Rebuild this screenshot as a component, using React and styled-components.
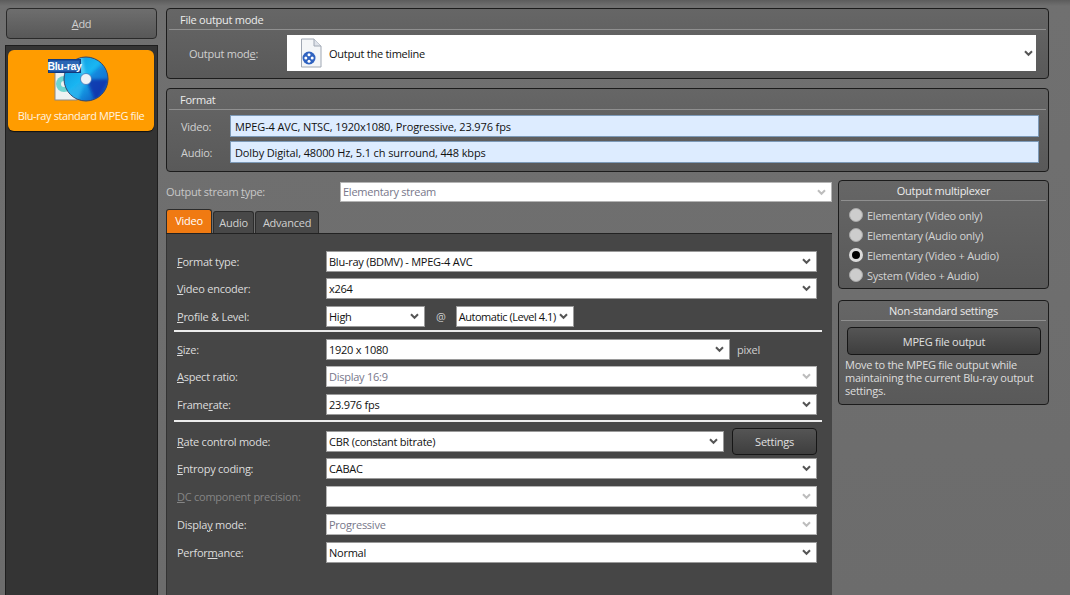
import React from "react";
import styled, { createGlobalStyle } from "styled-components";

const GlobalStyle = createGlobalStyle`
  html, body {
    margin: 0;
    padding: 0;
    background: #6b6b6b;
  }
  body {
    font-family: "Open Sans", "Liberation Sans", sans-serif;
    font-size: 11px;
    letter-spacing: -0.25px;
    color: #e4e4e4;
  }
  u {
    text-underline-offset: 1px;
  }
`;

const Page = styled.div`
  width: 1070px;
  height: 595px;
  overflow: hidden;
  display: flex;
  align-items: stretch;
  box-sizing: border-box;
  padding: 8px 21px 0 5px;
  background: linear-gradient(#5c5c5c 0, #707070 6px, #6c6c6c 100%);
`;

const Sidebar = styled.div`
  width: 153px;
  margin-right: 8px;
  display: flex;
  flex-direction: column;
  gap: 6px;
`;

const AddButton = styled.div`
  height: 31px;
  margin: 0 1px;
  box-sizing: border-box;
  border: 1px solid #2a2a2a;
  border-radius: 4px;
  background: linear-gradient(#6e6e6e, #585858);
  color: #d0d0d0;
  display: flex;
  align-items: center;
  justify-content: center;
`;

const PresetList = styled.div`
  flex: 1;
  box-sizing: border-box;
  padding: 4px 3px 0 2px;
  background: #343434;
  border: 1px solid #1e1e1e;
  border-bottom: 0;
`;

const PresetCard = styled.div`
  height: 81px;
  box-sizing: border-box;
  background: #ff9c00;
  border-radius: 6px;
  box-shadow: 0 1px 1px #111;
  display: flex;
  flex-direction: column;
  align-items: center;
  padding-top: 6px;
  color: #fff4e0;
`;

const PresetName = styled.div`
  margin-top: 4px;
  letter-spacing: -0.4px;
  white-space: nowrap;
`;

const Main = styled.div`
  flex: 1;
  min-width: 0;
  display: flex;
  flex-direction: column;
`;

const Panel = styled.div`
  box-sizing: border-box;
  height: ${(p) => p.$height}px;
  margin-top: ${(p) => p.$top || 0}px;
  background: linear-gradient(#666, #595959);
  border: 1px solid #1c1c1c;
  border-radius: 4px;
`;

const PanelTitle = styled.div`
  height: ${(p) => (p.$center ? 19 : 20)}px;
  margin: 0 2px;
  padding: 0 ${(p) => (p.$center ? 0 : 11)}px;
  border-bottom: 1px solid #8f8f8f;
  display: flex;
  align-items: center;
  justify-content: ${(p) => (p.$center ? "center" : "flex-start")};
  color: #ececec;
`;

const ModeRow = styled.div`
  display: flex;
  align-items: center;
  padding: 5px 12px 0 22px;
`;

const ModeLabel = styled.div`
  width: 98px;
  color: #d0d0d0;
`;

const ModeCombo = styled.div`
  flex: 1;
  height: 36px;
  background: #fff;
  color: #111;
  display: flex;
  align-items: center;
  padding: 0 3px 0 12px;
  gap: 6px;
`;

const FormatRow = styled.div`
  display: flex;
  align-items: center;
  padding: 0 9px 0 14px;
  margin-top: ${(p) => p.$top}px;
`;

const FormatLabel = styled.div`
  width: 49px;
  color: #d0d0d0;
`;

const FormatValue = styled.div`
  flex: 1;
  height: 22px;
  box-sizing: border-box;
  background: #ddecff;
  border: 1px solid #7d9ab8;
  color: #111;
  display: flex;
  align-items: center;
  padding-left: 4px;
  letter-spacing: -0.12px;
`;

const Lower = styled.div`
  flex: 1;
  min-height: 0;
  display: flex;
  gap: 6px;
  margin-top: 9px;
`;

const LeftColumn = styled.div`
  width: 666px;
  display: flex;
  flex-direction: column;
`;

const StreamRow = styled.div`
  height: 22px;
  display: flex;
  align-items: center;
  color: #c8c8c8;
`;

const StreamLabel = styled.div`
  width: 174px;
  margin-top: -2px;
`;

const Tabs = styled.div`
  display: flex;
  align-items: flex-end;
  height: 24px;
  margin-top: 6px;
  gap: 1px;
`;

const Tab = styled.div`
  height: ${(p) => (p.$active ? 24 : 22)}px;
  width: ${(p) => p.$width}px;
  box-sizing: border-box;
  border: 1px solid #2c2c2c;
  border-bottom: 0;
  border-radius: 3px 3px 0 0;
  padding-bottom: ${(p) => (p.$active ? 2 : 0)}px;
  background: ${(p) => (p.$active ? "#f07a12" : "#484848")};
  color: ${(p) => (p.$active ? "#fff" : "#d0d0d0")};
  display: flex;
  align-items: center;
  justify-content: center;
`;

const TabBody = styled.div`
  flex: 1;
  box-sizing: border-box;
  background: #464646;
  border-top: 1px solid #222;
  box-shadow: inset 1px 0 0 #333;
  padding: 17px 15px 0 11px;
`;

const Row = styled.div`
  display: flex;
  align-items: center;
  height: 21px;
  margin-top: ${(p) => p.$top}px;
  color: ${(p) => (p.$muted ? "#858585" : "#dcdcdc")};
`;

const RowLabel = styled.div`
  width: 149px;
  flex: none;
`;

const Combo = styled.div`
  flex: ${(p) => (p.$width ? "none" : 1)};
  width: ${(p) => (p.$width ? `${p.$width}px` : "auto")};
  height: ${(p) => (p.$short ? 20 : 21)}px;
  box-sizing: border-box;
  background: #fff;
  border: 1px solid ${(p) => (p.$disabled ? "#b4b4b4" : "#9a9a9a")};
  color: ${(p) => (p.$disabled ? "#77778a" : "#111")};
  display: flex;
  align-items: center;
  padding: 0 5px 0 2px;
  white-space: nowrap;
`;

const ComboText = styled.div`
  flex: 1;
  min-width: 0;
  margin-top: ${(p) => (p.$lift ? -2 : 0)}px;
`;

const LevelText = styled(ComboText)`
  letter-spacing: -0.45px;
`;

const Side = styled.span`
  color: #cfcfcf;
  margin-left: ${(p) => p.$gap}px;
  margin-right: ${(p) => p.$right || 0}px;
`;

const Rule = styled.div`
  height: 2px;
  background: #ececec;
  margin: ${(p) => p.$top}px -5px 0 -3px;
`;

const SettingsButton = styled.div`
  width: 85px;
  height: 27px;
  margin: -3px 0 -3px 8px;
  flex: none;
  box-sizing: border-box;
  border: 1px solid #161616;
  border-radius: 4px;
  background: linear-gradient(#555, #3e3e3e);
  color: #e0e0e0;
  display: flex;
  align-items: center;
  justify-content: center;
`;

const RightColumn = styled.div`
  flex: 1;
  margin-top: -1px;
  display: flex;
  flex-direction: column;
`;

const RadioList = styled.div`
  padding: 4px 0 0 10px;
  display: flex;
  flex-direction: column;
`;

const RadioRow = styled.div`
  height: 20px;
  display: flex;
  align-items: center;
  gap: 4px;
  color: #d4d4d4;
`;

const RadioDot = styled.div`
  width: 14px;
  height: 14px;
  box-sizing: border-box;
  border-radius: 50%;
  border: ${(p) => (p.$on ? "3px solid #dcdcdc" : "1px solid #a8a8a8")};
  background: ${(p) => (p.$on ? "#000" : "#cdcdcd")};
`;

const WideButton = styled.div`
  height: 28px;
  margin: 6px 7px 0 8px;
  box-sizing: border-box;
  border: 1px solid #161616;
  border-radius: 4px;
  background: linear-gradient(#555, #3e3e3e);
  color: #e0e0e0;
  display: flex;
  align-items: center;
  justify-content: center;
`;

const Note = styled.div`
  padding: 3px 6px 0;
  line-height: 13px;
  color: #dedede;
`;

const Chevron = ({ muted }) => (
  <svg width="9" height="7" viewBox="0 0 9 7" style={{ flex: "none" }}>
    <path d="M1 1.2 L4.5 4.8 L8 1.2" fill="none" stroke={muted ? "#bdbdbd" : "#555"} strokeWidth="2" />
  </svg>
);

const DiscIcon = () => (
  <svg width="66" height="48" viewBox="0 0 66 48">
    <defs>
      <linearGradient id="disc" x1="0" y1="0" x2="1" y2="1">
        <stop offset="0" stopColor="#0b8fd8" />
        <stop offset="0.45" stopColor="#19b6f2" />
        <stop offset="1" stopColor="#0a3fb4" />
      </linearGradient>
      <filter id="soft">
        <feGaussianBlur stdDeviation="1.6" />
      </filter>
      <clipPath id="discClip">
        <circle cx="38" cy="23" r="21.5" />
      </clipPath>
    </defs>
    <rect x="7" y="14" width="22" height="30" fill="#eef2f2" stroke="#8a8a8a" />
    <circle cx="16" cy="28" r="8" fill="#6fd5d0" />
    <circle cx="16" cy="28" r="3" fill="#eef2f2" />
    <circle cx="38" cy="23" r="22" fill="url(#disc)" stroke="#34446a" strokeWidth="1" />
    <g clipPath="url(#discClip)">
      <g filter="url(#soft)">
        <path d="M38 23 L62 23 L48 47 Z" fill="#0a2aa8" opacity="0.8" />
        <path d="M38 23 L58 6 L62 23 Z" fill="#0e74d6" opacity="0.6" />
        <path d="M38 23 L22 4 L34 -1 Z" fill="#6fdcfb" opacity="0.7" />
        <path d="M38 23 L17 38 L29 47 Z" fill="#2ab4ee" opacity="0.8" />
      </g>
    </g>
    <circle cx="38" cy="23" r="5.5" fill="#eef2f6" stroke="#3a6ab0" strokeWidth="0.7" />
    <rect x="0.5" y="3.5" width="32" height="13" fill="#1b4f9e" stroke="#123a7c" />
    <rect x="2" y="5" width="29" height="10" fill="#2a66b4" />
    <text x="16.5" y="13.5" textAnchor="middle" fontFamily="Liberation Sans, sans-serif" fontWeight="700" fontSize="10.5" fill="#fff" letterSpacing="-0.3">Blu-ray</text>
  </svg>
);

const FileIcon = () => (
  <svg width="24" height="30" viewBox="0 0 24 30" style={{ flex: "none" }}>
    <path d="M2.5 1 H15 L22 8 V29 H2.5 Z" fill="#f4f6f8" stroke="#a0a8b4" />
    <path d="M15 1 V8 H22" fill="#dfe3ea" stroke="#a0a8b4" />
    <circle cx="10" cy="20" r="6.5" fill="#2f62c0" />
    <circle cx="10" cy="16.8" r="1.5" fill="#fff" />
    <circle cx="10" cy="23.2" r="1.5" fill="#fff" />
    <circle cx="6.8" cy="20" r="1.5" fill="#fff" />
    <circle cx="13.2" cy="20" r="1.5" fill="#fff" />
  </svg>
);

const formRow = (label, key, value, top, extra = {}) => {
  const i = label.lastIndexOf(key);
  return (
    <Row $top={top} $muted={extra.muted}>
      <RowLabel>
        {label.slice(0, i)}
        <u>{key}</u>
        {label.slice(i + key.length)}
      </RowLabel>
      <Combo $disabled={extra.disabled}>
        <ComboText>{value}</ComboText>
        <Chevron muted={extra.disabled} />
      </Combo>
    </Row>
  );
};

const muxItems = [
  ["Elementary (Video only)", false],
  ["Elementary (Audio only)", false],
  ["Elementary (Video + Audio)", true],
  ["System (Video + Audio)", false],
];

export default function App() {
  return (
    <Page>
      <GlobalStyle />
      <Sidebar>
        <AddButton>
          <span>
            <u>A</u>dd
          </span>
        </AddButton>
        <PresetList>
          <PresetCard>
            <DiscIcon />
            <PresetName>Blu-ray standard MPEG file</PresetName>
          </PresetCard>
        </PresetList>
      </Sidebar>
      <Main>
        <Panel $height={71}>
          <PanelTitle>File output mode</PanelTitle>
          <ModeRow>
            <ModeLabel>
              Output mod<u>e</u>:
            </ModeLabel>
            <ModeCombo>
              <FileIcon />
              <ComboText>Output the timeline</ComboText>
              <Chevron />
            </ModeCombo>
          </ModeRow>
        </Panel>
        <Panel $height={84} $top={9}>
          <PanelTitle>Format</PanelTitle>
          <FormatRow $top={5}>
            <FormatLabel>Video:</FormatLabel>
            <FormatValue>MPEG-4 AVC, NTSC, 1920x1080, Progressive, 23.976 fps</FormatValue>
          </FormatRow>
          <FormatRow $top={4}>
            <FormatLabel>Audio:</FormatLabel>
            <FormatValue>Dolby Digital, 48000 Hz, 5.1 ch surround, 448 kbps</FormatValue>
          </FormatRow>
        </Panel>
        <Lower>
          <LeftColumn>
            <StreamRow>
              <StreamLabel>
                Output stream <u>t</u>ype:
              </StreamLabel>
              <Combo $disabled $short>
                <ComboText $lift>Elementary stream</ComboText>
                <Chevron muted />
              </Combo>
            </StreamRow>
            <Tabs>
              <Tab $active $width={46}>Video</Tab>
              <Tab $width={41}>Audio</Tab>
              <Tab $width={64}>Advanced</Tab>
            </Tabs>
            <TabBody>
              {formRow("Format type:", "F", "Blu-ray (BDMV) - MPEG-4 AVC", 0)}
              {formRow("Video encoder:", "V", "x264", 6)}
              <Row $top={7}>
                <RowLabel>
                  <u>P</u>rofile &amp; Level:
                </RowLabel>
                <Combo $width={99}>
                  <ComboText>High</ComboText>
                  <Chevron />
                </Combo>
                <Side $gap={11} $right={10}>@</Side>
                <Combo $width={118}>
                  <LevelText>Automatic (Level 4.1)</LevelText>
                  <Chevron />
                </Combo>
              </Row>
              <Rule $top={3} />
              <Row $top={7}>
                <RowLabel>
                  <u>S</u>ize:
                </RowLabel>
                <Combo $width={404}>
                  <ComboText>1920 x 1080</ComboText>
                  <Chevron />
                </Combo>
                <Side $gap={7}>pixel</Side>
              </Row>
              {formRow("Aspect ratio:", "A", "Display 16:9", 6, { disabled: true })}
              {formRow("Framerate:", "r", "23.976 fps", 7)}
              <Rule $top={5} />
              <Row $top={9}>
                <RowLabel>
                  <u>R</u>ate control mode:
                </RowLabel>
                <Combo>
                  <ComboText>CBR (constant bitrate)</ComboText>
                  <Chevron />
                </Combo>
                <SettingsButton>Settings</SettingsButton>
              </Row>
              {formRow("Entropy coding:", "E", "CABAC", 6)}
              {formRow("DC component precision:", "D", "", 7, { muted: true, disabled: true })}
              {formRow("Display mode:", "y", "Progressive", 7, { disabled: true })}
              {formRow("Performance:", "m", "Normal", 7)}
            </TabBody>
          </LeftColumn>
          <RightColumn>
            <Panel $height={109}>
              <PanelTitle $center>Output multiplexer</PanelTitle>
              <RadioList>
                {muxItems.map(([label, on]) => (
                  <RadioRow key={label}>
                    <RadioDot $on={on} />
                    {label}
                  </RadioRow>
                ))}
              </RadioList>
            </Panel>
            <Panel $height={105} $top={11}>
              <PanelTitle $center>Non-standard settings</PanelTitle>
              <WideButton>MPEG file output</WideButton>
              <Note>Move to the MPEG file output while maintaining the current Blu-ray output settings.</Note>
            </Panel>
          </RightColumn>
        </Lower>
      </Main>
    </Page>
  );
}
